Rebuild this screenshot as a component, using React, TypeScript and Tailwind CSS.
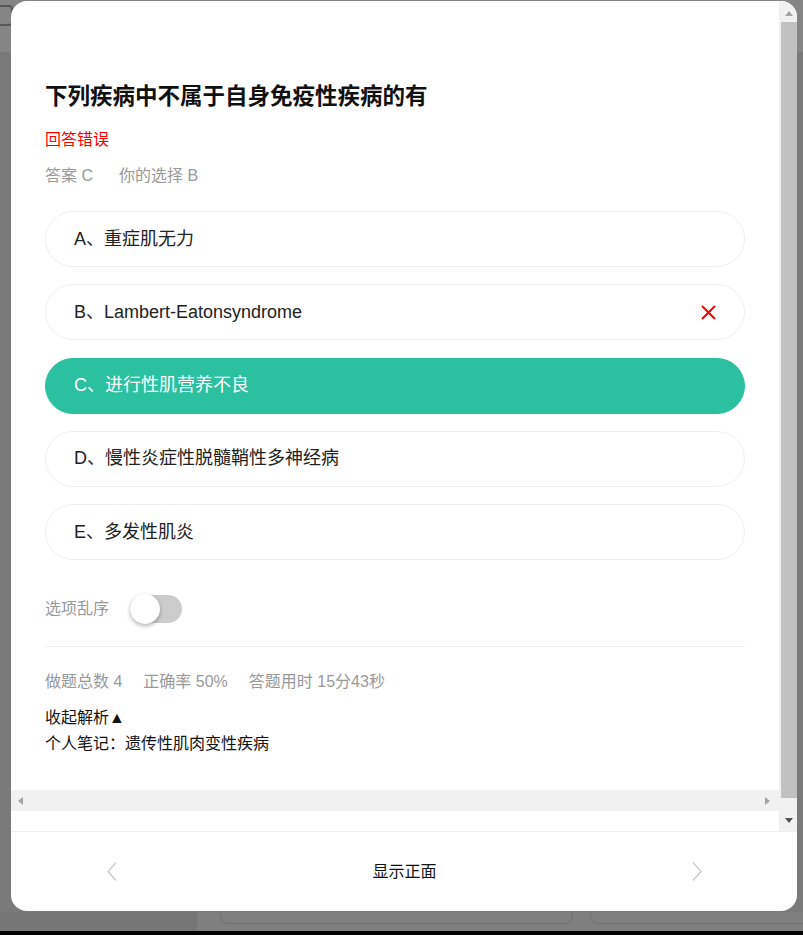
import React from "react";

type Opt = { key: string; text: string; state: "normal" | "wrong" | "correct" };

const options: Opt[] = [
  { key: "A", text: "重症肌无力", state: "normal" },
  { key: "B", text: "Lambert-Eatonsyndrome", state: "wrong" },
  { key: "C", text: "进行性肌营养不良", state: "correct" },
  { key: "D", text: "慢性炎症性脱髓鞘性多神经病", state: "normal" },
  { key: "E", text: "多发性肌炎", state: "normal" },
];

function OptionRow({ o }: { o: Opt }) {
  const correct = o.state === "correct";
  return (
    <div
      className={
        correct
          ? "flex h-[56px] items-center justify-between rounded-full border border-[#2ac0a0] bg-[#2ac0a0] pl-[28px] pr-[28px] text-[18px] text-white"
          : "flex h-[56px] items-center justify-between rounded-full border border-[#efefef] bg-white pl-[28px] pr-[28px] text-[18px] text-[#222]"
      }
    >
      <span>
        {o.key}、{o.text}
      </span>
      {o.state === "wrong" && (
        <svg width="15" height="15" viewBox="0 0 15 15">
          <path d="M1 1 L14 14 M14 1 L1 14" stroke="#ff0000" strokeWidth="2" fill="none" />
        </svg>
      )}
    </div>
  );
}

export default function App() {
  return (
    <div className="relative h-[935px] w-[803px] overflow-hidden bg-[#7a7a7a] font-[family-name:'Liberation_Sans','Noto_Sans_CJK_SC',sans-serif]">
      {/* underlying page behind the overlay */}
      <div className="flex h-full flex-col">
        <div className="flex h-[52px] items-start bg-[#858585] pt-[5px]">
          <div className="-ml-[3px] h-[21px] w-[16px] rounded-[4px] border-2 border-[#585858]" />
        </div>
        <div className="flex-1" />
        <div className="flex h-[19px]">
          <div className="w-[197px] bg-[#767676]" />
          <div className="flex flex-1 gap-[17px] bg-[#7f7f7f] pl-[23px]">
            <div className="h-[12px] w-[353px] rounded-b-[8px] border border-t-0 border-[#737373]" />
            <div className="h-[12px] flex-1 rounded-bl-[8px] border border-t-0 border-r-0 border-[#737373]" />
          </div>
        </div>
        <div className="h-[4px] bg-black" />
      </div>

      {/* modal */}
      <div className="absolute left-[11px] top-[1px] flex h-[910px] w-[786px] flex-col overflow-hidden rounded-[16px] bg-white">
        <div className="flex h-[830px]">
          <div className="flex w-[768px] flex-col">
            <div className="h-[789px] overflow-hidden px-[34px] pt-[81px]">
              <div className="text-[22.5px] font-bold leading-[30px] text-[#111]">
                下列疾病中不属于自身免疫性疾病的有
              </div>
              <div className="mt-[16px] text-[16px] leading-[24px] text-[#ff0000]">回答错误</div>
              <div className="mt-[12px] flex gap-[26px] text-[16px] leading-[24px] text-[#999]">
                <span>答案 C</span>
                <span>你的选择 B</span>
              </div>
              <div className="mt-[23px] flex flex-col gap-[17.3px]">
                {options.map((o) => (
                  <OptionRow key={o.key} o={o} />
                ))}
              </div>
              <div className="mt-[34px] flex h-[30px] items-center">
                <span className="text-[16px] text-[#999]">选项乱序</span>
                <div className="relative ml-[21px] h-[30px] w-[52px]">
                  <div className="mt-[1px] h-[28px] w-[52px] rounded-full bg-[#cccccc]" />
                  <div className="absolute left-0 top-0 h-[30px] w-[30px] rounded-full bg-white shadow-[0_2px_4px_rgba(0,0,0,0.3)]" />
                </div>
              </div>
              <div className="mt-[22px] h-px bg-[#eeeeee]" />
              <div className="mt-[23px] flex gap-[21px] text-[16px] leading-[24px] text-[#999]">
                <span>做题总数 4</span>
                <span>正确率 50%</span>
                <span>答题用时 15分43秒</span>
              </div>
              <div className="mt-[11px] text-[16px] leading-[26px] text-[#111]">收起解析▲</div>
              <div className="text-[16px] leading-[26px] text-[#111]">个人笔记：遗传性肌肉变性疾病</div>
            </div>
            {/* horizontal scrollbar */}
            <div className="flex h-[21px] items-center justify-between bg-[#f1f1f1] pl-[7px] pr-[9px]">
              <svg width="5" height="8" viewBox="0 0 5 8">
                <path d="M5 0 L0 4 L5 8 Z" fill="#a3a3a3" />
              </svg>
              <svg width="5" height="8" viewBox="0 0 5 8">
                <path d="M0 0 L5 4 L0 8 Z" fill="#a3a3a3" />
              </svg>
            </div>
            <div className="flex-1" />
          </div>
          {/* vertical scrollbar */}
          <div className="flex w-[18px] flex-col bg-[#f1f1f1]">
            <div className="flex h-[21px] items-center justify-center pl-[2px] pt-[3px]">
              <svg width="8" height="5" viewBox="0 0 8 5">
                <path d="M0 5 L4 0 L8 5 Z" fill="#a3a3a3" />
              </svg>
            </div>
            <div className="flex-1 pl-[2px]">
              <div className="h-full bg-[#c1c1c1]" />
            </div>
            <div className="h-[13px]" />
            <div className="flex h-[20px] items-center justify-center pl-[2px] pb-[2px]">
              <svg width="8" height="5" viewBox="0 0 8 5">
                <path d="M0 0 L8 0 L4 5 Z" fill="#505050" />
              </svg>
            </div>
          </div>
        </div>
        {/* footer */}
        <div className="flex flex-1 items-center justify-between border-t border-[#eeeeee] pl-[96px] pr-[95px]">
          <svg width="10" height="19" viewBox="0 0 10 19">
            <polyline points="9,0.5 1,9.5 9,18.5" stroke="#c8c8c8" strokeWidth="1.2" fill="none" />
          </svg>
          <span className="text-[16px] text-[#111]">显示正面</span>
          <svg width="10" height="19" viewBox="0 0 10 19">
            <polyline points="1,0.5 9,9.5 1,18.5" stroke="#c8c8c8" strokeWidth="1.2" fill="none" />
          </svg>
        </div>
      </div>
    </div>
  );
}
